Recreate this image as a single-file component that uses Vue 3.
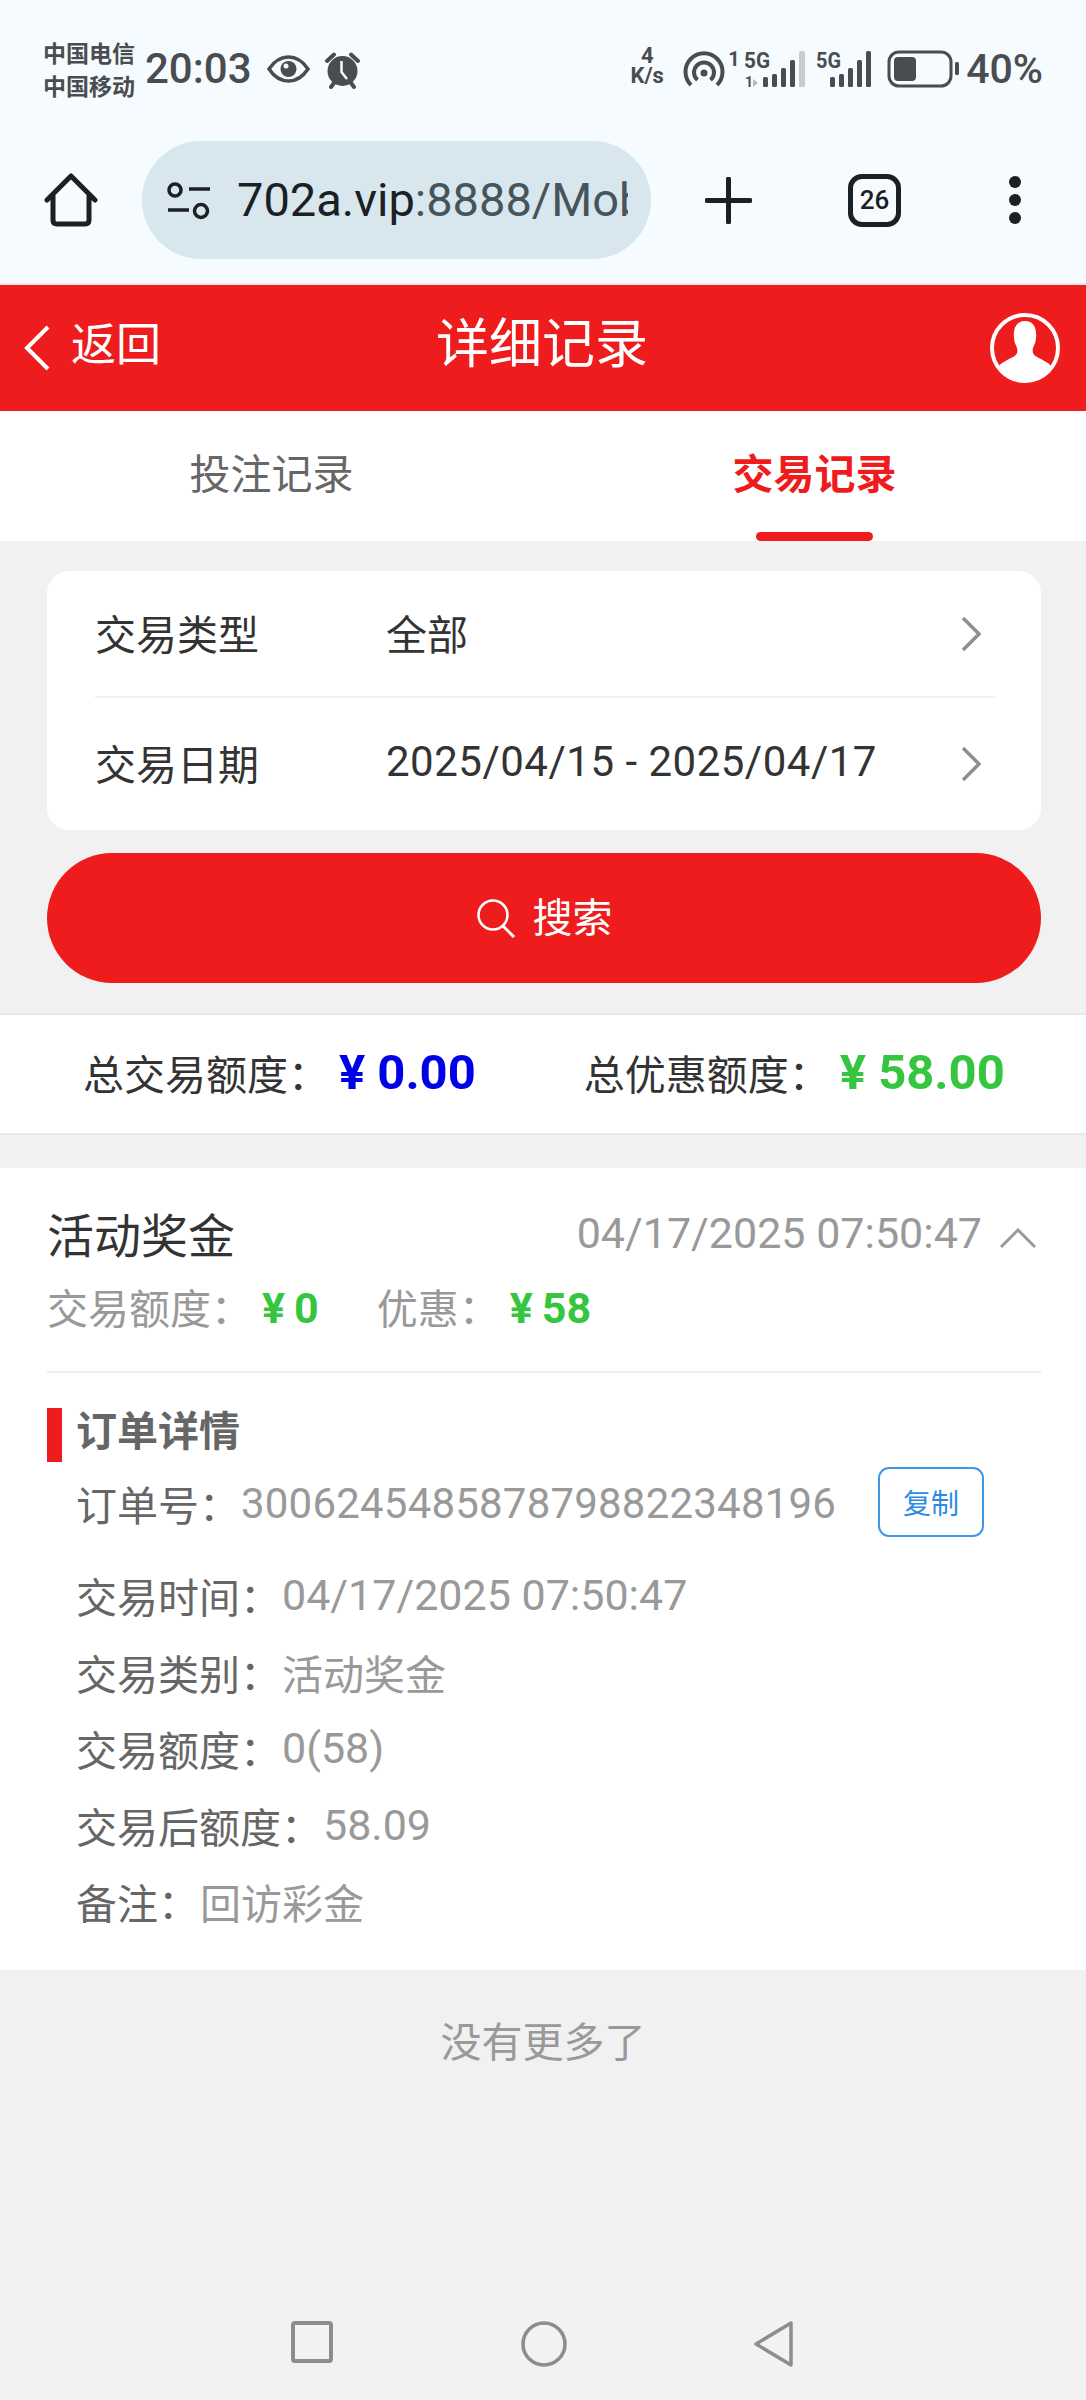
<script setup>
const details = [
	{ label: "交易时间：", value: "04/17/2025 07:50:47", num: true },
	{ label: "交易类别：", value: "活动奖金" },
	{ label: "交易额度：", value: "0(58)", num: true },
	{ label: "交易后额度：", value: "58.09", num: true },
	{ label: "备注：", value: "回访彩金" },
]

const bars = [
	{ x: 0, h: 10 },
	{ x: 9, h: 13 },
	{ x: 18, h: 19 },
	{ x: 27, h: 27 },
	{ x: 36, h: 36 },
]
</script>

<template>
	<div class="page">
		<!-- phone status bar -->
		<div class="status">
			<div class="carrier"><span>中国电信</span><span>中国移动</span></div>
			<span class="time">20:03</span>
			<svg class="eye" width="43" height="28" viewBox="0 0 43 28">
				<path d="M2 14C8 5 14 2 21.500 2S35 5 41 14C35 23 29 26 21.500 26S8 23 2 14Z" fill="none" stroke="#4a4d50" stroke-width="3.500" />
				<circle cx="21.500" cy="14" r="8" fill="#4a4d50" />
				<circle cx="19" cy="11" r="2.500" fill="#f5fbfe" />
			</svg>
			<svg class="alarm" width="37" height="37" viewBox="0 0 37 37">
				<circle cx="18.500" cy="19" r="15" fill="#4a4d50" />
				<path d="M3 9L10 2.500M34 9L27 2.500M7 35L10 31M30 35L27 31" stroke="#4a4d50" stroke-width="4" stroke-linecap="round" />
				<path d="M17.500 9V20L23 27" fill="none" stroke="#f5fbfe" stroke-width="2.500" />
			</svg>
			<div class="status-right">
				<div class="speed"><span class="speed-num">4</span><span>K/s</span></div>
				<svg class="hotspot" width="42" height="36" viewBox="0 0 42 36">
					<path d="M8 34A18.500 18.500 0 1 1 34 34" fill="none" stroke="#4a4d50" stroke-width="4" />
					<path d="M14.500 29A10 10 0 1 1 27.500 29" fill="none" stroke="#4a4d50" stroke-width="4" />
					<circle cx="21" cy="22" r="3.500" fill="#4a4d50" />
				</svg>
				<span class="hot-num">1</span>
				<svg class="signal" width="61" height="36" viewBox="0 0 61 36">
					<text x="0" y="17" class="net" textLength="26" lengthAdjust="spacingAndGlyphs">5G</text>
					<text x="1" y="36" class="net-small">1</text>
					<path d="M9 36V28L14 32Z" fill="#b9bcbe" />
					<rect x="19" y="26" width="5" height="10" rx="1.500" fill="#4a4d50" />
					<rect x="28" y="23" width="5" height="13" rx="1.500" fill="#4a4d50" />
					<rect x="37" y="17" width="5" height="19" rx="1.500" fill="#4a4d50" />
					<rect x="46" y="9" width="5" height="27" rx="1.500" fill="#4a4d50" />
					<rect x="55" y="0" width="6" height="36" rx="1.500" fill="#c9cccd" />
				</svg>
				<svg class="signal two" width="55" height="36" viewBox="0 0 55 36">
					<text x="0" y="17" class="net" textLength="25" lengthAdjust="spacingAndGlyphs">5G</text>
					<rect v-for="bar in bars" :key="bar.x" :x="bar.x + 14" :y="36 - bar.h" width="5" :height="bar.h" rx="1.500" fill="#4a4d50" />
				</svg>
				<svg class="battery" width="72" height="38" viewBox="0 0 72 38">
					<rect x="2" y="2" width="62" height="34" rx="10" fill="none" stroke="#4a4d50" stroke-width="3" />
					<rect x="7" y="7" width="22" height="24" rx="4" fill="#4a4d50" />
					<rect x="68" y="12" width="4" height="13" rx="1.500" fill="#4a4d50" />
				</svg>
				<span class="percent">40%</span>
			</div>
		</div>

		<!-- browser toolbar -->
		<div class="toolbar">
			<svg class="home" width="54" height="54" viewBox="0 0 54 54">
				<path d="M3 27L27 3L51 27M9 22V47Q9 51 13 51H41Q45 51 45 47V22" fill="none" stroke="#1a2024" stroke-width="5" stroke-linejoin="round" stroke-linecap="round" />
			</svg>
			<div class="address">
				<svg class="tune" width="44" height="38" viewBox="0 0 44 38">
					<circle cx="8" cy="8" r="6" fill="none" stroke="#1a2024" stroke-width="3.500" />
					<circle cx="34" cy="29" r="6.500" fill="none" stroke="#1a2024" stroke-width="3.500" />
					<path d="M22 7H43M1 28H22" stroke="#1a2024" stroke-width="3.500" />
				</svg>
				<div class="url"><span class="host">702a.vip</span>:8888/Mob</div>
			</div>
			<svg class="plus" width="47" height="47" viewBox="0 0 47 47">
				<path d="M23.500 2V45M2 23.500H45" stroke="#1a2024" stroke-width="5" stroke-linecap="round" />
			</svg>
			<div class="tab-count">26</div>
			<div class="more"><i></i><i></i><i></i></div>
		</div>

		<!-- red site header -->
		<div class="header">
			<div class="back">
				<svg width="26" height="46" viewBox="0 0 26 46">
					<path d="M24 2L3 23L24 44" fill="none" stroke="#fff" stroke-width="4" />
				</svg>
				<span class="back-text">返回</span>
			</div>
			<div class="title">详细记录</div>
			<div class="user">
				<svg width="70" height="70" viewBox="0 0 70 70">
					<circle cx="35" cy="35" r="33" fill="none" stroke="#fff" stroke-width="4" />
					<path d="M35 8C44 8 47 16 46 25C46 29 44 32 43 35C42 39 43 42 47 44C52 47 58 49 61 53C55 62 46 67 35 67S15 62 9 53C12 49 18 47 23 44C27 42 28 39 27 35C26 32 24 29 24 25C23 16 26 8 35 8Z" fill="#fff" />
				</svg>
			</div>
		</div>

		<div class="tabs">
			<div class="tab">投注记录</div>
			<div class="tab active">交易记录</div>
		</div>

		<!-- filters -->
		<div class="filter">
			<div class="filter-row first">
				<span class="filter-label">交易类型</span>
				<span class="filter-value">全部</span>
				<svg class="chev" width="20" height="36" viewBox="0 0 20 36"><path d="M2 2L18 18L2 34" fill="none" stroke="#8f8f8f" stroke-width="3.500" /></svg>
			</div>
			<div class="filter-row">
				<span class="filter-label">交易日期</span>
				<span class="filter-value num">2025/04/15 - 2025/04/17</span>
				<svg class="chev" width="20" height="36" viewBox="0 0 20 36"><path d="M2 2L18 18L2 34" fill="none" stroke="#8f8f8f" stroke-width="3.500" /></svg>
			</div>
		</div>

		<div class="search">
			<svg width="40" height="40" viewBox="0 0 40 40">
				<circle cx="17" cy="17" r="14.500" fill="none" stroke="#fff" stroke-width="2.500" />
				<path d="M27 28L38 39" stroke="#fff" stroke-width="3" />
			</svg>
			<span>搜索</span>
		</div>

		<!-- totals -->
		<div class="totals">
			<span class="total-label">总交易额度：</span>
			<span class="total-num blue"><i>¥</i>0.00</span>
			<span class="total-label second">总优惠额度：</span>
			<span class="total-num green"><i>¥</i>58.00</span>
		</div>

		<!-- record -->
		<div class="record">
			<div class="record-top">
				<span class="record-name">活动奖金</span>
				<span class="record-date">04/17/2025 07:50:47</span>
				<svg class="caret" width="36" height="20" viewBox="0 0 36 20"><path d="M1 19L18 2L35 19" fill="none" stroke="#999" stroke-width="3" /></svg>
			</div>
			<div class="record-sum">
				<span>交易额度：</span><b><i>¥</i>0</b>
				<span class="gap">优惠：</span><b><i>¥</i>58</b>
			</div>
			<div class="record-line"></div>
			<div class="detail-title">订单详情</div>
			<div class="order">
				<span class="dark">订单号：</span>
				<span class="order-no">3006245485878798822348196</span>
				<span class="copy">复制</span>
			</div>
			<div v-for="row in details" :key="row.label" class="detail-row">
				<span class="dark">{{ row.label }}</span>
				<span class="light" :class="{ num: row.num }">{{ row.value }}</span>
			</div>
		</div>

		<div class="no-more">没有更多了</div>

		<!-- phone nav buttons -->
		<div class="nav">
			<svg width="42" height="42" viewBox="0 0 42 42"><rect x="2" y="2" width="38" height="38" rx="2" fill="none" stroke="#8d8d8d" stroke-width="4" /></svg>
			<svg width="46" height="46" viewBox="0 0 46 46"><circle cx="23" cy="23" r="21" fill="none" stroke="#8d8d8d" stroke-width="3.500" /></svg>
			<svg width="40" height="46" viewBox="0 0 40 46"><path d="M37 2V44L2 23Z" fill="none" stroke="#8d8d8d" stroke-width="3.500" stroke-linejoin="round" /></svg>
		</div>
	</div>
</template>

<style scoped>
.page {
	width: 1086px;
	height: 2400px;
	display: flex;
	flex-direction: column;
	overflow: hidden;
	background: #f1f1f1;
	font-family: Roboto, "Noto Sans CJK SC", sans-serif;
	color: #333;
}
i {
	font-style: normal;
}

.status {
	height: 128px;
	flex: none;
	box-sizing: border-box;
	padding: 36px 43px 0;
	display: flex;
	align-items: flex-start;
	background: #f5fbfe;
	color: #4a4d50;
}
.carrier {
	display: flex;
	flex-direction: column;
	font-size: 23px;
	line-height: 33px;
	font-weight: 700;
	margin-right: 10px;
	width: 92px;
	white-space: nowrap;
	margin-top: 2px;
}
.time {
	font-size: 42px;
	line-height: 66px;
	font-weight: 500;
	width: 122px;
}
.eye {
	margin-top: 19px;
}
.alarm {
	margin: 16px 0 0 14px;
}
.status-right {
	margin-left: auto;
	display: flex;
	align-items: flex-start;
	height: 66px;
}
.speed {
	width: 38px;
	display: flex;
	flex-direction: column;
	align-items: center;
	font-size: 22px;
	line-height: 22px;
	font-weight: 700;
	margin: 11px 17px 0 0;
}
.speed-num {
	height: 18px;
	line-height: 18px;
}
.hotspot {
	margin-top: 15px;
}
.hot-num {
	width: 11px;
	font-size: 20px;
	line-height: 24px;
	font-weight: 700;
	margin: 11px 5px 0 3px;
}
.signal {
	margin-top: 15px;
	overflow: visible;
}
.signal.two {
	margin-left: 11px;
}
.net {
	font: 700 22px Roboto, sans-serif;
	fill: #4a4d50;
}
.net-small {
	font: 700 14px Roboto, sans-serif;
	fill: #4a4d50;
}
.battery {
	margin: 14px 0 0 16px;
}
.percent {
	font-size: 41px;
	line-height: 66px;
	font-weight: 500;
	margin-left: 7px;
}

.toolbar {
	height: 157px;
	flex: none;
	box-sizing: border-box;
	padding: 13px 0 24px 44px;
	display: flex;
	align-items: center;
	background: #f5fbfe;
	border-bottom: 2px solid #e3e5e8;
}
.home {
	flex: none;
}
.address {
	width: 509px;
	height: 118px;
	flex: none;
	margin-left: 44px;
	box-sizing: border-box;
	padding: 0 23px 0 25px;
	display: flex;
	align-items: center;
	border-radius: 59px;
	background: #d8e6ed;
}
.tune {
	flex: none;
	margin-top: 2px;
}
.url {
	margin-left: 26px;
	font-size: 47px;
	line-height: 60px;
	color: #46545b;
	white-space: nowrap;
	overflow: hidden;
}
.host {
	color: #1a2024;
}
.plus {
	flex: none;
	margin-left: 54px;
}
.tab-count {
	width: 53px;
	height: 53px;
	flex: none;
	box-sizing: border-box;
	margin-left: 96px;
	display: flex;
	align-items: center;
	justify-content: center;
	border: 5px solid #1a2024;
	border-radius: 14px;
	font-size: 26px;
	font-weight: 500;
	color: #1a2024;
}
.more {
	flex: none;
	margin-left: 108px;
	display: flex;
	flex-direction: column;
	gap: 6px;
}
.more i {
	width: 12px;
	height: 12px;
	border-radius: 50%;
	background: #1a2024;
}

.header {
	height: 126px;
	flex: none;
	box-sizing: border-box;
	padding: 0 26px 0 24px;
	display: flex;
	align-items: center;
	background: #ee1c1c;
	color: #fff;
}
.back {
	flex: 1;
	display: flex;
	align-items: center;
	gap: 21px;
	font-size: 45px;
}
.back-text {
	margin-bottom: 4px;
	line-height: 60px;
}
.title {
	font-size: 53px;
	line-height: 70px;
	margin-bottom: 6px;
}
.user {
	flex: 1;
	height: 70px;
	display: flex;
	justify-content: flex-end;
}

.tabs {
	height: 130px;
	flex: none;
	display: flex;
	background: #fff;
}
.tab {
	position: relative;
	flex: 1;
	text-align: center;
	font-size: 41px;
	line-height: 128px;
	color: #666;
}
.tab.active {
	color: #ee1c1c;
	font-weight: 700;
}
.tab.active::after {
	content: "";
	position: absolute;
	left: 50%;
	bottom: 0;
	width: 117px;
	height: 9px;
	margin-left: -59px;
	border-radius: 5px;
	background: #ee1c1c;
}

.filter {
	margin: 30px 45px 0 47px;
	height: 259px;
	flex: none;
	box-sizing: border-box;
	padding: 0 46px 0 48px;
	border-radius: 22px;
	background: #fff;
}
.filter-row {
	height: 130px;
	display: flex;
	align-items: center;
	box-sizing: border-box;
	padding-bottom: 3px;
}
.filter-row.first {
	height: 127px;
	border-bottom: 2px solid #f1f1f1;
}
.filter-label {
	width: 291px;
	font-size: 41px;
	color: #333;
}
.filter-value {
	flex: 1;
	font-size: 41px;
}
.filter-value.num {
	font-size: 42px;
	letter-spacing: 0.5px;
}
.chev {
	margin: 4px 14px 0 0;
}

.search {
	margin: 23px 45px 0 47px;
	height: 130px;
	flex: none;
	display: flex;
	align-items: center;
	justify-content: center;
	gap: 17px;
	border-radius: 65px;
	background: #ee1c1c;
	color: #fff;
	font-size: 40px;
}
.search span {
	margin-bottom: 6px;
}

.totals {
	margin-top: 30px;
	height: 122px;
	flex: none;
	box-sizing: border-box;
	padding: 0 0 4px 83px;
	display: flex;
	align-items: center;
	background: #fff;
	border-top: 2px solid #e9e9e9;
	border-bottom: 2px solid #e9e9e9;
}
.total-label {
	font-size: 41px;
	color: #333;
}
.total-label.second {
	margin-left: 108px;
}
.total-num {
	font-size: 49px;
	font-weight: 700;
	margin-left: 10px;
}
.total-num i {
	margin-right: 12px;
}
.blue {
	color: #0000e6;
}
.green {
	color: #35c53f;
}

.record {
	margin-top: 33px;
	height: 803px;
	flex: none;
	box-sizing: border-box;
	padding: 0 45px 0 47px;
	background: #fff;
	border-bottom: 1px solid #f0f0f0;
}
.record-top {
	height: 102px;
	padding-top: 32px;
	box-sizing: border-box;
	display: flex;
	align-items: center;
}
.record-name {
	font-size: 47px;
	line-height: 64px;
	margin-top: 3px;
	color: #333;
}
.record-date {
	margin: 0 0 4px auto;
	font-size: 43px;
	color: #999;
}
.caret {
	margin: 6px 5px 0 18px;
}
.record-sum {
	height: 72px;
	display: flex;
	align-items: center;
	font-size: 41px;
	color: #999;
}
.record-sum b {
	font-size: 43px;
	color: #35c53f;
	margin: 3px 0 0 10px;
}
.record-sum b i {
	margin-right: 9px;
}
.record-sum .gap {
	margin-left: 58px;
}
.record-line {
	margin-top: 29px;
	height: 2px;
	background: #ededed;
}
.detail-title {
	margin-top: 35px;
	height: 54px;
	box-sizing: border-box;
	padding-left: 14px;
	border-left: 15px solid #ee1c1c;
	font-size: 41px;
	line-height: 48px;
	font-weight: 700;
	color: #666;
}
.order {
	height: 78px;
	margin-top: 2px;
	padding-left: 29px;
	display: flex;
	align-items: center;
	white-space: nowrap;
}
.dark {
	font-size: 41px;
	color: #666;
}
.light {
	font-size: 41px;
	color: #999;
	margin-left: 1px;
}
.light.num {
	font-size: 43px;
}
.order-no {
	font-size: 42px;
	letter-spacing: 0.2px;
	margin-left: 1px;
	color: #999;
}
.copy {
	width: 106px;
	height: 70px;
	box-sizing: border-box;
	margin: 0 0 2px 42px;
	display: flex;
	align-items: center;
	justify-content: center;
	border: 2px solid #3f97e8;
	border-radius: 11px;
	font-size: 28px;
	color: #2a8be6;
}
.detail-row {
	height: 76.500px;
	padding-left: 29px;
	display: flex;
	align-items: center;
	white-space: nowrap;
}
.order + .detail-row {
	margin-top: 15px;
}

.no-more {
	height: 145px;
	flex: none;
	text-align: center;
	font-size: 41px;
	line-height: 145px;
	color: #999;
}

.nav {
	flex: 1;
	box-sizing: border-box;
	padding: 205px 292px 0 291px;
	display: flex;
	align-items: flex-start;
	justify-content: space-between;
	background: #f2f2f2;
}
</style>
